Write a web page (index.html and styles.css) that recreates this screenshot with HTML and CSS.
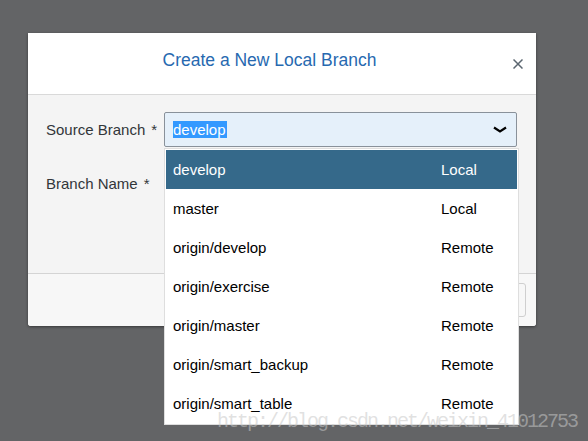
FILE: index.html
```html
<!DOCTYPE html>
<html>
<head>
<meta charset="utf-8">
<link rel="stylesheet" href="styles.css">
</head>
<body>
<div class="dialog">
  <header class="dlg-head">
    <h1 class="dlg-title">Create a New Local Branch</h1>
    <button class="dlg-close" aria-label="Close">
      <svg width="10" height="10" viewBox="0 0 10 10"><path d="M0.5 0.5 L9.5 9.5 M9.5 0.5 L0.5 9.5" stroke="#5b6670" stroke-width="1.5" fill="none"/></svg>
    </button>
  </header>
  <div class="dlg-body">
    <div class="field">
      <label class="lbl">Source Branch<span class="req">*</span></label>
      <div class="select-wrap">
        <div class="select">
          <span class="sel-text">develop</span>
          <svg class="chev" width="14" height="7" viewBox="0 0 14 7"><path d="M1 1.5 L7 5.5 L13 1.5" stroke="#000" stroke-width="2.2" fill="none"/></svg>
        </div>
        <ul class="dropdown">
          <li class="opt active"><span>develop</span><span>Local</span></li>
          <li class="opt"><span>master</span><span>Local</span></li>
          <li class="opt"><span>origin/develop</span><span>Remote</span></li>
          <li class="opt"><span>origin/exercise</span><span>Remote</span></li>
          <li class="opt"><span>origin/master</span><span>Remote</span></li>
          <li class="opt"><span>origin/smart_backup</span><span>Remote</span></li>
          <li class="opt"><span>origin/smart_table</span><span>Remote</span></li>
        </ul>
      </div>
    </div>
    <div class="field">
      <label class="lbl">Branch Name<span class="req">*</span></label>
      <div class="input"></div>
    </div>
  </div>
  <footer class="dlg-foot">
    <button class="btn"></button>
  </footer>
</div>
<div class="watermark">http://blog.csdn.net/weixin_41012753</div>
</body>
</html>
```

FILE: styles.css
```css
html, body {
  margin: 0;
  padding: 0;
}
body {
  background: #636466;
  width: 588px;
  height: 441px;
  overflow: hidden;
  font-family: "Liberation Sans", Arial, sans-serif;
  font-size: 15px;
  padding-top: 33px;
  box-sizing: border-box;
}
.dialog {
  margin-left: 28px;
  width: 508px;
  background: #fff;
  border-radius: 0 0 3px 3px;
  box-shadow: 0 1px 3px rgba(0,0,0,0.45);
}
.dlg-head {
  height: 61px;
  display: flex;
  align-items: center;
  padding: 0 13px 0 18px;
  border-bottom: 1px solid #d9d9d9;
  background: #fff;
}
.dlg-title {
  flex: 1;
  margin: 0 0 6px 0;
  text-align: center;
  font-weight: normal;
  font-size: 17.5px;
  color: #2769b0;
}
.dlg-close {
  width: 30px;
  height: 20px;
  padding: 0;
  border: 0;
  background: transparent;
  display: flex;
  justify-content: flex-end;
  align-items: center;
}
.dlg-close svg {
  display: block;
}
.dlg-body {
  height: 179px;
  box-sizing: border-box;
  background: #f4f4f4;
  padding: 17px 19px 0 18px;
  display: flex;
  flex-direction: column;
  gap: 19px;
  border-bottom: 1px solid #d4d4d4;
}
.field {
  display: flex;
  align-items: center;
  height: 35px;
}
.lbl {
  width: 118px;
  color: #32363a;
  white-space: nowrap;
}
.req {
  margin-left: 6px;
}
.select-wrap {
  position: relative;
  flex: 1;
  height: 35px;
}
.select {
  height: 35px;
  box-sizing: border-box;
  border: 1px solid #89919a;
  border-radius: 2px;
  background: #e5f0fa;
  display: flex;
  align-items: center;
  padding: 0 9px 0 8px;
}
.sel-text {
  flex: 1;
}
.sel-text::before {
  content: none;
}
.sel-text {
  color: #fff;
}
.sel-text {
  background: linear-gradient(#3399ff, #3399ff) no-repeat 0 0 / 54px 100%;
  line-height: 17px;
}
.chev {
  display: block;
}
.dropdown {
  position: absolute;
  top: 36px;
  left: 0;
  width: 355px;
  height: 277px;
  box-sizing: border-box;
  margin: 0;
  padding: 1px;
  list-style: none;
  background: #fff;
  border: 1px solid #dedede;
  overflow: hidden;
  z-index: 2;
}
.opt {
  height: 39px;
  line-height: 39px;
  display: grid;
  grid-template-columns: 268px 1fr;
  padding-left: 7px;
  color: #000;
}
.opt.active {
  background: #35698a;
  color: #fff;
}
.input {
  flex: 1;
  height: 35px;
  box-sizing: border-box;
  border: 1px solid #bfbfbf;
  border-radius: 2px;
  background: #fff;
}
.dlg-foot {
  height: 52px;
  box-sizing: border-box;
  background: #f7f7f7;
  display: flex;
  justify-content: flex-end;
  padding: 9px 10px 0 0;
  border-radius: 0 0 3px 3px;
}
.btn {
  width: 80px;
  height: 34px;
  border: 1px solid #cfcfcf;
  border-radius: 3px;
  background: #f7f7f7;
}
.watermark {
  position: absolute;
  left: 217px;
  top: 412px;
  font-family: "Liberation Mono", monospace;
  font-size: 20px;
  line-height: 20px;
  letter-spacing: -2px;
  color: rgba(200,200,200,0.55);
  white-space: nowrap;
  z-index: 5;
}
```
